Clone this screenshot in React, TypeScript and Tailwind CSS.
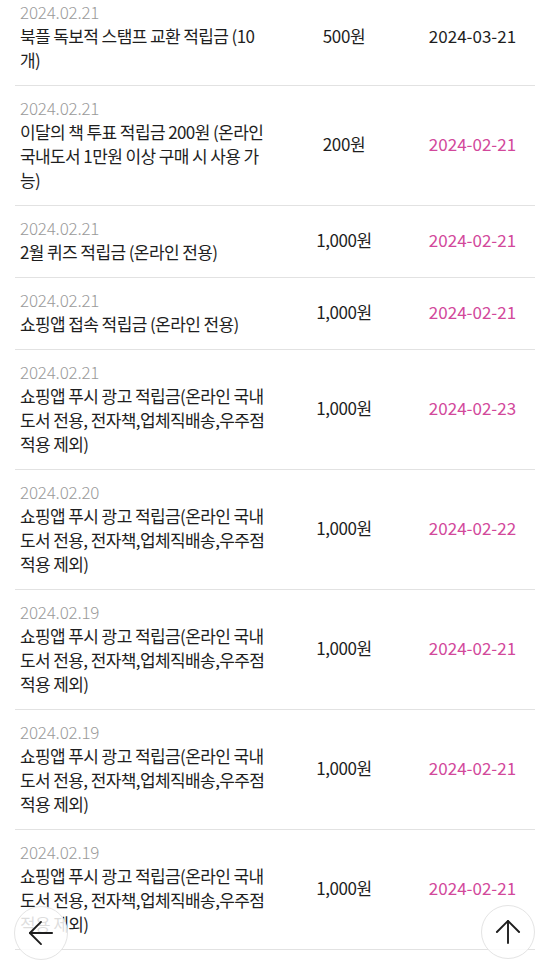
import { ArrowLeft, ArrowUp } from 'lucide-react';

type Row = {
  date: string;
  title: string;
  amount: string;
  expire: string;
  soon?: boolean;
};

const rows: Row[] = [
  { date: '2024.02.21', title: '북플 독보적 스탬프 교환 적립금 (10개)', amount: '500원', expire: '2024-03-21' },
  { date: '2024.02.21', title: '이달의 책 투표 적립금 200원 (온라인 국내도서 1만원 이상 구매 시 사용 가능)', amount: '200원', expire: '2024-02-21', soon: true },
  { date: '2024.02.21', title: '2월 퀴즈 적립금 (온라인 전용)', amount: '1,000원', expire: '2024-02-21', soon: true },
  { date: '2024.02.21', title: '쇼핑앱 접속 적립금 (온라인 전용)', amount: '1,000원', expire: '2024-02-21', soon: true },
  { date: '2024.02.21', title: '쇼핑앱 푸시 광고 적립금(온라인 국내도서 전용, 전자책,업체직배송,우주점 적용 제외)', amount: '1,000원', expire: '2024-02-23', soon: true },
  { date: '2024.02.20', title: '쇼핑앱 푸시 광고 적립금(온라인 국내도서 전용, 전자책,업체직배송,우주점 적용 제외)', amount: '1,000원', expire: '2024-02-22', soon: true },
  { date: '2024.02.19', title: '쇼핑앱 푸시 광고 적립금(온라인 국내도서 전용, 전자책,업체직배송,우주점 적용 제외)', amount: '1,000원', expire: '2024-02-21', soon: true },
  { date: '2024.02.19', title: '쇼핑앱 푸시 광고 적립금(온라인 국내도서 전용, 전자책,업체직배송,우주점 적용 제외)', amount: '1,000원', expire: '2024-02-21', soon: true },
  { date: '2024.02.19', title: '쇼핑앱 푸시 광고 적립금(온라인 국내도서 전용, 전자책,업체직배송,우주점 적용 제외)', amount: '1,000원', expire: '2024-02-21', soon: true },
];

export default function App() {
  return (
    <div
      className="relative h-[965px] overflow-hidden bg-white text-[17px] text-[#1e1e1e]"
      style={{ fontFamily: '"Noto Sans CJK KR", "Noto Sans", sans-serif' }}
    >
      {/* list is scrolled a bit, first row cut off at the top */}
      <ul className="mt-[-10px] px-[15px]">
        {rows.map((row, i) => (
          <li key={i} className="flex items-center border-b border-[#e2e2e2] pt-[10px] pb-[13px] pl-[5px] pr-[10px]">
            <div className="w-[248px] shrink-0">
              <p className="leading-[24px] text-[#9a9a9a] font-light tracking-[-0.2px]">{row.date}</p>
              <p className="leading-[24px] tracking-[-0.6px] break-all">{row.title}</p>
            </div>
            <div className="w-[152px] shrink-0 text-center leading-[24px] tracking-[-0.4px]">{row.amount}</div>
            <div className={`flex-1 text-center leading-[24px] ${row.soon ? 'text-[#d2489b]' : 'text-[#1e1e1e]'}`}>
              {row.expire}
            </div>
          </li>
        ))}
      </ul>

      <button className="absolute left-[14px] bottom-[5px] flex h-[54px] w-[54px] items-center justify-center rounded-full border border-[#e4e4e4] bg-white/85">
        <ArrowLeft size={38} strokeWidth={1.2} className="text-[#1e1e1e]" />
      </button>
      <button className="absolute right-[15px] bottom-[6px] flex h-[54px] w-[54px] items-center justify-center rounded-full border border-[#e4e4e4] bg-white/85">
        <ArrowUp size={38} strokeWidth={1.2} className="text-[#1e1e1e]" />
      </button>
    </div>
  );
}
